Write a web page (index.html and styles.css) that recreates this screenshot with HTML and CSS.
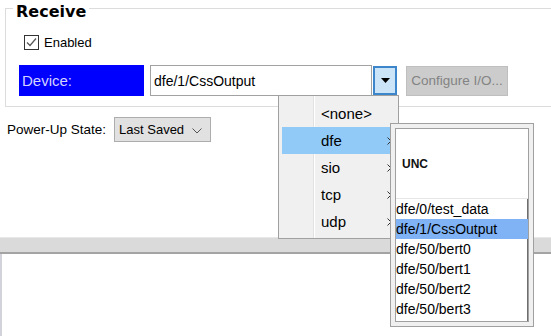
FILE: index.html
```html
<!DOCTYPE html>
<html>
<head>
<meta charset="utf-8">
<link rel="stylesheet" href="styles.css">
</head>
<body>
<div class="top">
  <div class="group">
    <div class="group-title">Receive</div>
    <div class="check-row">
      <svg class="checkbox" width="15" height="15" viewBox="0 0 15 15"><rect x="0.5" y="0.5" width="14" height="14" fill="#fff" stroke="#333"/><path d="M3 7.5 L6 10.5 L12 3.5" fill="none" stroke="#555" stroke-width="1.2"/></svg>
      <span>Enabled</span>
    </div>
    <div class="device-row">
      <div class="device-label">Device:</div>
      <div class="device-input">dfe/1/CssOutput</div>
      <div class="drop-btn"><svg width="9" height="5" viewBox="0 0 9 5"><path d="M0 0 H9 L4.5 5 Z" fill="#000"/></svg></div>
      <div class="config-btn">Configure I/O...</div>
    </div>
  </div>
  <div class="power-row">
    <span class="power-label">Power-Up State:</span>
    <div class="combo"><span>Last Saved</span><svg width="10" height="6" viewBox="0 0 10 6"><path d="M0.5 0.5 L5 5 L9.5 0.5" fill="none" stroke="#555" stroke-width="1"/></svg></div>
  </div>
</div>
<div class="splitter"></div>
<div class="bottom"></div>

<div class="menu">
  <div class="menu-item"><span>&lt;none&gt;</span></div>
  <div class="menu-item active"><span>dfe</span><svg class="arrow" width="5" height="8" viewBox="0 0 5 8"><path d="M0.5 0.5 L4 4 L0.5 7.5" fill="none" stroke="#333"/></svg></div>
  <div class="menu-item"><span>sio</span><svg class="arrow" width="5" height="8" viewBox="0 0 5 8"><path d="M0.5 0.5 L4 4 L0.5 7.5" fill="none" stroke="#333"/></svg></div>
  <div class="menu-item"><span>tcp</span><svg class="arrow" width="5" height="8" viewBox="0 0 5 8"><path d="M0.5 0.5 L4 4 L0.5 7.5" fill="none" stroke="#333"/></svg></div>
  <div class="menu-item"><span>udp</span><svg class="arrow" width="5" height="8" viewBox="0 0 5 8"><path d="M0.5 0.5 L4 4 L0.5 7.5" fill="none" stroke="#333"/></svg></div>
</div>

<div class="submenu">
  <div class="sub-inner">
    <div class="unc">UNC</div>
    <div class="list">
      <div class="list-item">dfe/0/test_data</div>
      <div class="list-item selected">dfe/1/CssOutput</div>
      <div class="list-item">dfe/50/bert0</div>
      <div class="list-item">dfe/50/bert1</div>
      <div class="list-item">dfe/50/bert2</div>
      <div class="list-item">dfe/50/bert3</div>
    </div>
  </div>
</div>
</body>
</html>
```

FILE: styles.css
```css
html, body {
  margin: 0;
  padding: 0;
}
body {
  width: 551px;
  height: 336px;
  overflow: hidden;
  background: #fff;
  font-family: "Liberation Sans", Arial, sans-serif;
  color: #000;
  display: flex;
  flex-direction: column;
  position: relative;
}
.top {
  height: 237px;
  flex: none;
  overflow: hidden;
}
.group {
  margin: 8px -10px 0 5px;
  border: 1px solid #dcdcdc;
  padding: 0 0 10px 13px;
}
.group-title {
  width: fit-content;
  margin: -6px 0 0 -6px;
  padding: 0 3px;
  background: #fff;
  font-family: "DejaVu Sans", sans-serif;
  font-weight: bold;
  font-size: 16px;
  line-height: 18px;
}
.check-row {
  margin: 14px 0 0 5px;
  height: 15px;
  display: flex;
  align-items: center;
  gap: 5px;
  font-size: 13px;
}
.checkbox {
  display: block;
  flex: none;
}
.device-row {
  margin-top: 15px;
  height: 31px;
  display: flex;
  align-items: center;
}
.device-label {
  box-sizing: border-box;
  width: 125px;
  height: 31px;
  background: #0000ff;
  color: #d4d4ff;
  font-size: 15px;
  padding-left: 3px;
  display: flex;
  align-items: center;
}
.device-input {
  box-sizing: border-box;
  margin-left: 6px;
  width: 222px;
  height: 31px;
  border: 1px solid #a2a2a2;
  padding-left: 3px;
  font-size: 14px;
  display: flex;
  align-items: center;
}
.drop-btn {
  box-sizing: border-box;
  margin-left: 1px;
  width: 24px;
  height: 29px;
  background: #cce4f7;
  border: 2px solid #3d86cc;
  display: flex;
  align-items: center;
  justify-content: center;
}
.drop-btn svg {
  display: block;
}
.config-btn {
  box-sizing: border-box;
  margin-left: 9px;
  width: 102px;
  height: 30px;
  background: #cccccc;
  border: 1px solid #bfbfbf;
  color: #838383;
  font-size: 13.5px;
  display: flex;
  align-items: center;
  justify-content: center;
}
.power-row {
  margin: 10px 0 0 7px;
  height: 25px;
  display: flex;
  align-items: center;
  gap: 8px;
}
.power-label {
  font-size: 13.5px;
}
.combo {
  box-sizing: border-box;
  width: 97px;
  height: 25px;
  background: #e1e1e1;
  border: 1px solid #adadad;
  padding: 0 8px 0 4px;
  font-size: 13px;
  display: flex;
  align-items: center;
  justify-content: space-between;
}
.combo svg {
  display: block;
  margin-top: 2px;
}
.splitter {
  flex: none;
  height: 14px;
  background: #dadada;
  border-top: 1px solid #e8e8e8;
  border-bottom: 2px solid #a3a3a3;
}
.bottom {
  flex: 1;
  border-left: 2px solid #d2d3da;
}
.menu {
  position: absolute;
  left: 278px;
  top: 95px;
  width: 121px;
  height: 144px;
  box-sizing: border-box;
  border: 1px solid #a0a0a0;
  padding: 4px 3px 0 3px;
  background:
    linear-gradient(to right, transparent 34px, #e2e2e2 34px, #e2e2e2 35px, #fff 35px, #fff 36px, transparent 36px),
    #f0f0f0;
}
.menu-item {
  height: 27px;
  padding: 0 3px 0 39px;
  display: flex;
  align-items: center;
  justify-content: space-between;
  font-size: 15px;
}
.menu-item.active {
  background: #91c9f7;
}
.arrow {
  display: block;
}
.submenu {
  position: absolute;
  left: 390px;
  top: 123px;
  width: 144px;
  height: 204px;
  box-sizing: border-box;
  border: 1px solid #a0a0a0;
  background: #f0f0f0;
  padding: 4px;
  display: flex;
  flex-direction: column;
}
.sub-inner {
  flex: 1;
  border: 1px solid #a0a0a0;
  background: #fff;
  display: flex;
  flex-direction: column;
}
.unc {
  height: 69px;
  border-bottom: 1px solid #e6e6e6;
  padding-left: 6px;
  display: flex;
  align-items: center;
  font-weight: bold;
  font-size: 12px;
  color: #111;
}
.list {
  flex: 1;
  box-shadow: inset -1px 0 0 #6e6e6e;
}
.list-item {
  height: 20px;
  line-height: 20px;
  font-size: 14px;
  white-space: nowrap;
}
.list-item.selected {
  background: #7fb3f5;
}
```
